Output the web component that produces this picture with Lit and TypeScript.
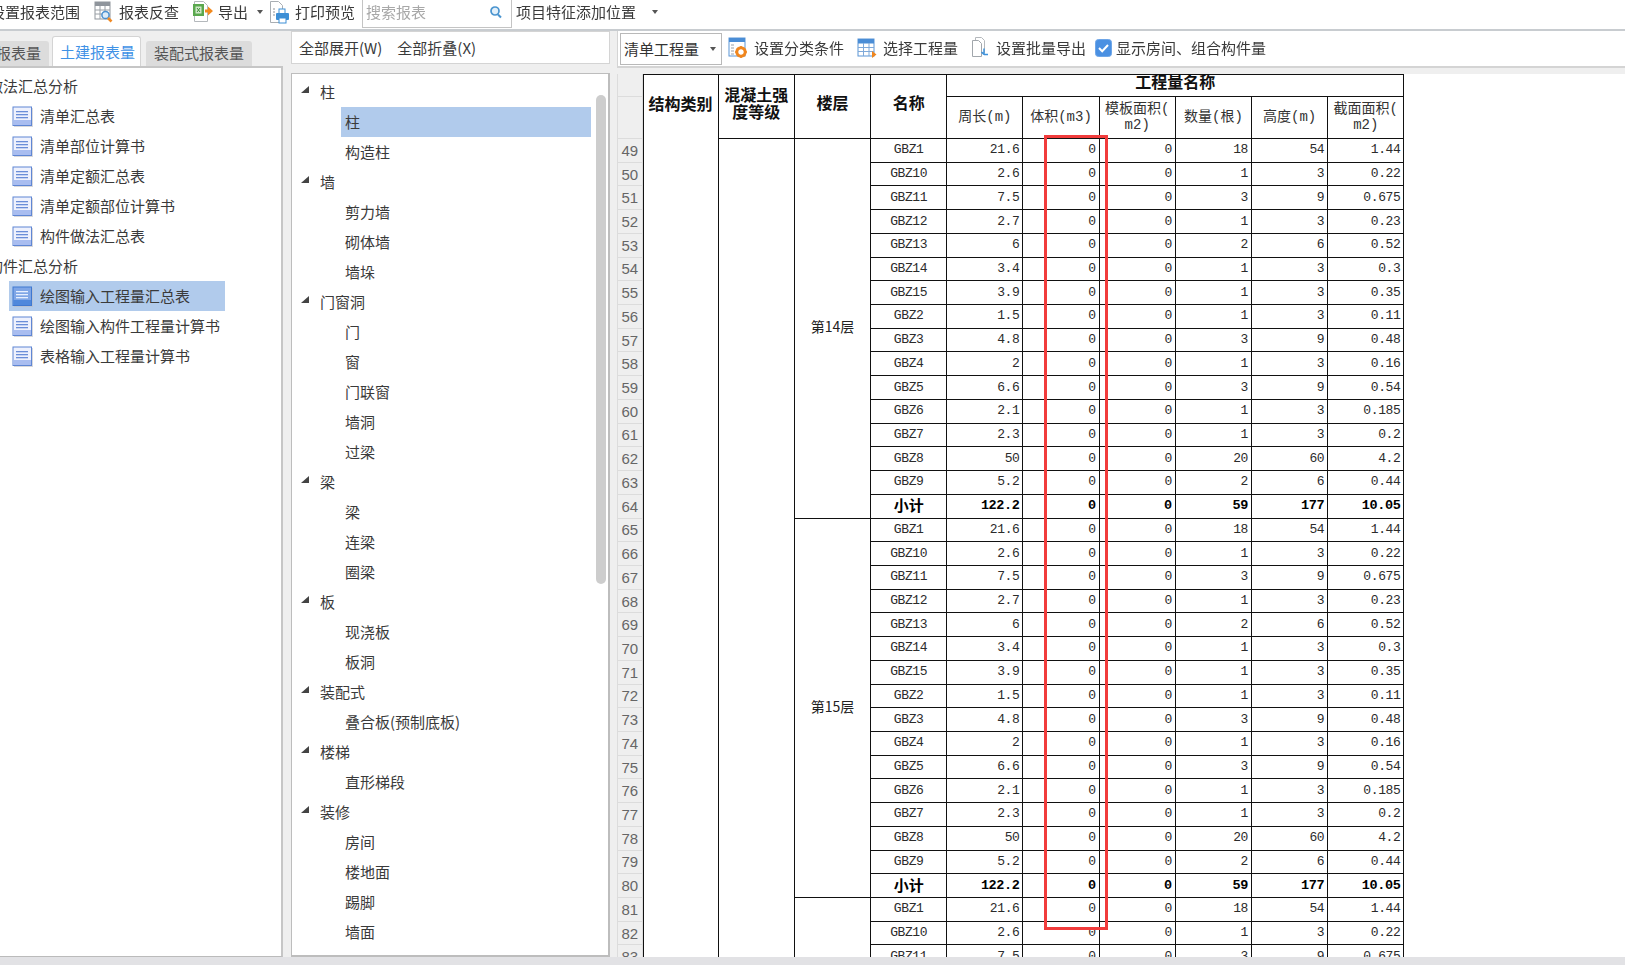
import { LitElement, html, css, svg } from "lit";
import { customElement } from "lit/decorators.js";

const base: (string | number)[][] = [
  ["GBZ1", "21.6", 0, 0, 18, 54, "1.44"],
  ["GBZ10", "2.6", 0, 0, 1, 3, "0.22"],
  ["GBZ11", "7.5", 0, 0, 3, 9, "0.675"],
  ["GBZ12", "2.7", 0, 0, 1, 3, "0.23"],
  ["GBZ13", "6", 0, 0, 2, 6, "0.52"],
  ["GBZ14", "3.4", 0, 0, 1, 3, "0.3"],
  ["GBZ15", "3.9", 0, 0, 1, 3, "0.35"],
  ["GBZ2", "1.5", 0, 0, 1, 3, "0.11"],
  ["GBZ3", "4.8", 0, 0, 3, 9, "0.48"],
  ["GBZ4", "2", 0, 0, 1, 3, "0.16"],
  ["GBZ5", "6.6", 0, 0, 3, 9, "0.54"],
  ["GBZ6", "2.1", 0, 0, 1, 3, "0.185"],
  ["GBZ7", "2.3", 0, 0, 1, 3, "0.2"],
  ["GBZ8", "50", 0, 0, 20, 60, "4.2"],
  ["GBZ9", "5.2", 0, 0, 2, 6, "0.44"],
  ["小计", "122.2", 0, 0, 59, 177, "10.05"],
];
const rows = [...base, ...base, ...base.slice(0, 3)];

const tree: [string, boolean, boolean?][] = [
  ["柱", true], ["柱", false, true], ["构造柱", false],
  ["墙", true], ["剪力墙", false], ["砌体墙", false], ["墙垛", false],
  ["门窗洞", true], ["门", false], ["窗", false], ["门联窗", false], ["墙洞", false], ["过梁", false],
  ["梁", true], ["梁", false], ["连梁", false], ["圈梁", false],
  ["板", true], ["现浇板", false], ["板洞", false],
  ["装配式", true], ["叠合板(预制底板)", false],
  ["楼梯", true], ["直形梯段", false],
  ["装修", true], ["房间", false], ["楼地面", false], ["踢脚", false], ["墙面", false], ["天棚", false],
];

const docIcon = (sel = false) => html`<svg class="doc" width="21" height="21" viewBox="0 0 21 21">
  <rect x="2" y="2" width="19" height="19" fill="#b9b9c0" opacity=".55"/>
  <rect x="1" y="1" width="18.5" height="18.5" fill="${sel ? "#7fa6e6" : "#eef1fd"}" stroke="${sel ? "#3f78d0" : "#5f86d4"}"/>
  <rect x="1.5" y="14" width="17.5" height="5" fill="${sel ? "#4f88dc" : "#a9bdf0"}"/>
  ${[5, 8, 11].map((y) => svg`<rect x="4" y="${y}" width="12" height="1.3" fill="${sel ? "#e8f0ff" : "#6b8ed8"}"/>`)}
</svg>`;

const reportIcon = html`<svg width="20" height="24" viewBox="0 0 20 24">
  <rect x="1" y="2" width="15" height="17" fill="#fff" stroke="#8f959c"/>
  <rect x="1" y="2" width="15" height="4" fill="#8f959c"/>
  <path d="M1 10h15M1 14h8M6 6v13M11 6v5" stroke="#9aa0a6" fill="none"/>
  <circle cx="11.5" cy="15" r="3.6" fill="#dcecf9" stroke="#4a90d0" stroke-width="1.5"/>
  <path d="M14 18l3.5 3.5" stroke="#f08a24" stroke-width="2.6"/>
</svg>`;
const exportIcon = html`<svg width="20" height="24" viewBox="0 0 20 24">
  <path d="M1.5 1.5h9l4 4v16h-13z" fill="#fff" stroke="#b4b8bc"/>
  <rect x="0" y="4" width="11" height="12" fill="#5aa84e"/>
  <rect x="2.5" y="6.5" width="6" height="7" fill="#cfe8c9"/>
  <path d="M4 8l3 4M7 8l-3 4" stroke="#3f8c35"/>
  <path d="M12 9.500h3v-3l5 4.500-5 4.500v-3h-3z" fill="#f28a1e"/>
</svg>`;
const printIcon = html`<svg width="21" height="25" viewBox="0 0 21 25">
  <path d="M1.500 1.500h8l4 4v17h-12z" fill="#fff" stroke="#a9aeb3"/>
  <path d="M4 9h2M4 12h2M4 15h2" stroke="#8d9298"/>
  <rect x="10" y="9" width="6" height="5" fill="#fff" stroke="#3d8fd6"/>
  <rect x="7" y="13" width="13" height="7" rx="1" fill="#3d8fd6"/>
  <rect x="10" y="18" width="7" height="5" fill="#fff" stroke="#3d8fd6"/>
</svg>`;
const searchIcon = html`<svg width="13" height="14" viewBox="0 0 13 14">
  <circle cx="6" cy="6" r="4" fill="#e3f0fa" stroke="#4a94cf" stroke-width="1.700"/>
  <path d="M9 9.500l3 3" stroke="#4a94cf" stroke-width="2"/>
</svg>`;
const gearIcon = html`<svg width="20" height="24" viewBox="0 0 20 24">
  <rect x="1" y="2" width="16" height="18" fill="#fff" stroke="#5b95d6"/>
  <rect x="1" y="2" width="16" height="4" fill="#4a8dd6"/>
  <path d="M3 9h3M3 12h3M3 15h3M3 18h3" stroke="#9aa0a6"/>
  <circle cx="13" cy="16" r="4.200" fill="#fff" stroke="#f0861e" stroke-width="3"/>
  <path d="M13 10v2.500M13 19.500v2.500M7 16h2.500M16.500 16h2.500M9 12l2 2M15 18l2 2M17 12l-2 2M11 18l-2 2" stroke="#f0861e" stroke-width="1.600"/>
</svg>`;
const gridIcon = html`<svg width="20" height="24" viewBox="0 0 20 24">
  <rect x="1" y="3" width="16" height="17" fill="#fff" stroke="#5b95d6"/>
  <rect x="1" y="3" width="16" height="4.500" fill="#4a8dd6"/>
  <path d="M1 11.500h16M1 15.500h16M6.500 7v13M12 7v13" stroke="#7fa9d9"/>
  <path d="M15 15l4.500 3.500-4.500 3.500z" fill="#f0861e"/>
</svg>`;
const batchIcon = html`<svg width="20" height="24" viewBox="0 0 20 24">
  <path d="M5.500 1.500h6l3 3v12h-9z" fill="#fff" stroke="#b4b8bc"/>
  <path d="M2.500 4.500h6l3 3v13h-9z" fill="#fff" stroke="#a2a7ac"/>
  <path d="M14 12.500v6M14 18.500h4" stroke="#3f92db" stroke-width="1.500" fill="none"/>
  <path d="M11.500 16l2.500 2.500" stroke="#3f92db" stroke-width="1.500" fill="none"/>
</svg>`;
const checkIcon = html`<svg width="17" height="18" viewBox="0 0 17 18">
  <rect x="0.500" y="0.500" width="16" height="17" rx="3" fill="#4a90e2" stroke="#6ea6e8"/>
  <path d="M4 9l3.200 3.200L13 6" stroke="#fff" stroke-width="2" fill="none"/>
</svg>`;
const caret = html`<i class="caret"></i>`;
const tri = html`<svg class="tri" width="8" height="8" viewBox="0 0 8 8"><path d="M8 0v7H0z" fill="#444"/></svg>`;

@customElement("app-root")
export class AppRoot extends LitElement {
  static styles = css`
    :host {
      display: block;
      width: 1625px;
      height: 965px;
      overflow: hidden;
      background: #efefef;
      font: 15px/20px "Noto Sans CJK SC", sans-serif;
      color: #3a3a3a;
    }
    .page { display: flex; flex-direction: column; height: 965px; filter: blur(0.35px); }
    .top {
      display: flex; align-items: center; height: 24px; padding-bottom: 5px; background: #fff;
      border-bottom: 2px solid #c8ccd0; flex: none; white-space: nowrap;
    }
    .top .first { margin-left: -10px; }
    .tool { display: flex; align-items: center; gap: 5px; }
    .t1 { margin-left: 14px; }
    .t2 { margin-left: 14px; }
    .t3 { margin-left: 6px; }
    .caret { width: 0; height: 0; border: 3px solid transparent; border-top: 4px solid #555; border-bottom: 0; }
    .t2 .caret { margin-left: 4px; }
    .search {
      margin-left: 7px; width: 150px; height: 28px; box-sizing: border-box; background: #fff;
      border: 1px solid #c4c4c4; border-top: 0; display: flex; align-items: center;
      justify-content: space-between; padding: 0 9px 4px 3px; color: #a8a8a8; align-self: flex-start;
    }
    .feature { margin-left: 4px; display: flex; align-items: center; gap: 16px; }
    .body { flex: 1; display: flex; min-height: 0; }
    .left { width: 283px; flex: none; display: flex; flex-direction: column; }
    .tabs { display: flex; align-items: flex-end; height: 35px; flex: none; overflow: hidden; }
    .tab {
      height: 25px; background: #dcdcdc; padding: 0 8px; line-height: 24px; color: #555;
      border-radius: 3px 3px 0 0; white-space: nowrap; flex: none;
    }
    .tab.clip { margin-left: -42px; }
    .tab.on {
      height: 30px; line-height: 29px; background: #fff; color: #3f92e6; margin: 0 5px 0 3px;
      padding: 0 7px; border: 1px solid #d4d4d4; border-bottom: 0; box-sizing: border-box; width: 89px;
    }
    .lp {
      flex: 1; background: #fff; border-top: 2px solid #c6c6c6; border-right: 2px solid #c6c6c6;
      border-bottom: 1px solid #bbb; padding-top: 3px; overflow: hidden; min-height: 0;
    }
    .sec { height: 30px; line-height: 29px; margin-left: -12px; white-space: nowrap; }
    .it { height: 30px; display: flex; align-items: center; margin-left: 9px; width: 216px; white-space: nowrap; }
    .it .doc { margin: 0 7px 0 3px; flex: none; }
    .it.on { background: #b1cbec; }
    .mid { width: 319px; margin-left: 8px; flex: none; display: flex; flex-direction: column; }
    .mt {
      height: 33px; flex: none; box-sizing: border-box; background: #fff; border: 1px solid #d4d4d4;
      display: flex; align-items: center; padding-left: 7px; gap: 15px; white-space: nowrap;
    }
    .tp {
      flex: 1; margin-top: 9px; background: #fff; border: 1px solid #bdbdbd; border-width: 1px 2px 2px 1px;
      padding-top: 2.500px; overflow: hidden; position: relative; min-height: 0;
    }
    .tr { height: 30px; display: flex; align-items: center; white-space: nowrap; }
    .tr.g .tri { margin: 0 11px 3px 9px; }
    .tr.c { margin-left: 49px; width: 250px; padding-left: 4px; box-sizing: border-box; }
    .tr.on { background: #b1cbec; }
    .thumb { position: absolute; left: 304px; top: 21px; width: 10px; height: 489px; border-radius: 5px; background: #cdcdcd; }
    .right { flex: 1; margin-left: 7px; display: flex; flex-direction: column; min-width: 0; position: relative; }
    .rt {
      height: 37px; flex: none; box-sizing: border-box; background: #fff; border-left: 1px solid #d4d4d4;
      border-bottom: 2px solid #d4d4d4; display: flex; align-items: center; white-space: nowrap; padding-left: 2px;
    }
    .rt .tool { margin-top: -2px; }
    .sel {
      width: 102px; height: 32px; box-sizing: border-box; border: 1px solid #b9b9b9; display: flex;
      align-items: center; justify-content: space-between; padding: 0 5px 0 3px; color: #333; flex: none;
    }
    .r1 { margin-left: 6px; gap: 6px; }
    .r2 { margin-left: 13px; gap: 6px; }
    .r3 { margin-left: 12px; gap: 6px; }
    .r4 { margin-left: 9px; gap: 4px; }
    .sheetwrap { flex: 1; margin-top: 6px; background: #fff; overflow: hidden; position: relative; min-height: 0; }
    .sheet {
      display: grid; grid-template-columns: 25.500px repeat(10, 76.200px);
      grid-template-rows: 23px 42px repeat(35, 23.730px); width: max-content; color: #222;
    }
    .cell {
      box-sizing: border-box; border-right: 1px solid #111; border-bottom: 1px solid #111;
      display: flex; align-items: center; justify-content: center; overflow: hidden; min-width: 0;
    }
    .rh {
      background: #efefef; border: 0; border-right: 1px solid #dcdcdc; border-bottom: 1px solid #dcdcdc;
      font: 15px/20px "Liberation Sans", sans-serif; color: #666; border-left: 1px solid #dcdcdc;
      padding-top: 1px;
    }
    .hd {
      font-size: 16px; font-weight: 700; text-align: center; line-height: 17px; padding: 0 0 8px;
      border-top: 1px solid #111; color: #111;
    }
    .hd.nb { border-bottom: 0; }
    .hd.first { border-left: 1px solid #111; }
    .blank.first { border-left: 1px solid #111; }
    .sub {
      font: 14px/16px "Liberation Mono", "Noto Sans CJK SC", monospace; text-align: center; color: #333;
      padding: 0 1px 1px;
    }
    .fl { font-size: 14px; color: #222; padding-bottom: 4px; }
    .num, .nm {
      font: 13px/16px "Liberation Mono", "Noto Sans CJK SC", monospace; letter-spacing: -0.4px; color: #2b2b2b;
    }
    .num { justify-content: flex-end; padding-right: 3px; }
    .tot { font-weight: 700; font-size: 13.500px; color: #000; }
    .nm.tot { font: 700 15px/16px "Noto Sans CJK SC", sans-serif; letter-spacing: 0; padding-bottom: 2px; }
    .redbox {
      position: absolute; left: 427px; top: 61px; width: 64px; height: 795px; box-sizing: border-box;
      border: 3px solid #f13c3c; pointer-events: none;
    }
    .foot { height: 8px; flex: none; background: #e2e2e5; }
  `;

  private cell(cls: string, col: string | number, row: string | number, content: unknown) {
    return html`<div class="cell ${cls}" style="grid-column:${col};grid-row:${row}">${content}</div>`;
  }

  private sheet() {
    const heads = [
      ["结构类别", 2], ["混凝土强度等级", 3], ["楼层", 4], ["名称", 5],
    ] as [string, number][];
    const subs: unknown[] = [
      "周长(m)", "体积(m3)", html`模板面积(<br />m2)`, "数量(根)", "高度(m)", html`截面面积(<br />m2)`,
    ];
    const lastRow = 3 + rows.length;
    return html`<div class="sheet">
      ${this.cell("rh", 1, 1, "")}
      ${this.cell("rh", 1, 2, "")}
      ${heads.map(([t, c]) => this.cell(`hd ${c === 2 ? "first nb" : ""}`, c, "1 / span 2", t))}
      ${this.cell("hd", "6 / span 6", 1, "工程量名称")}
      ${subs.map((s, i) => this.cell("sub", 6 + i, 2, s))}
      ${this.cell("blank first", 2, `3 / ${lastRow}`, "")}
      ${this.cell("blank", 3, `3 / ${lastRow}`, "")}
      ${this.cell("fl", 4, "3 / span 16", "第14层")}
      ${this.cell("fl", 4, "19 / span 16", "第15层")}
      ${this.cell("blank", 4, `35 / ${lastRow}`, "")}
      ${rows.map((r, i) => {
        const rn = 3 + i;
        const tot = r[0] === "小计" ? "tot" : "";
        return html`
          ${this.cell("rh", 1, rn, 49 + i)}
          ${this.cell(`nm ${tot}`, 5, rn, r[0])}
          ${r.slice(1).map((v, j) => this.cell(`num ${tot}`, 6 + j, rn, v))}
        `;
      })}
    </div>`;
  }

  render() {
    return html`<div class="page">
      <div class="top">
        <span class="first">设置报表范围</span>
        <div class="tool t1">${reportIcon}<span>报表反查</span></div>
        <div class="tool t2">${exportIcon}<span>导出</span>${caret}</div>
        <div class="tool t3">${printIcon}<span>打印预览</span></div>
        <div class="search"><span>搜索报表</span>${searchIcon}</div>
        <div class="feature"><span>项目特征添加位置</span>${caret}</div>
      </div>
      <div class="body">
        <div class="left">
          <div class="tabs">
            <div class="tab clip">钢筋报表量</div>
            <div class="tab on">土建报表量</div>
            <div class="tab">装配式报表量</div>
          </div>
          <div class="lp">
            <div class="sec">做法汇总分析</div>
            ${["清单汇总表", "清单部位计算书", "清单定额汇总表", "清单定额部位计算书", "构件做法汇总表"].map(
              (t) => html`<div class="it">${docIcon()}<span>${t}</span></div>`
            )}
            <div class="sec">构件汇总分析</div>
            <div class="it on">${docIcon(true)}<span>绘图输入工程量汇总表</span></div>
            ${["绘图输入构件工程量计算书", "表格输入工程量计算书"].map(
              (t) => html`<div class="it">${docIcon()}<span>${t}</span></div>`
            )}
          </div>
        </div>
        <div class="mid">
          <div class="mt"><span>全部展开(W)</span><span>全部折叠(X)</span></div>
          <div class="tp">
            ${tree.map(([t, g, on]) =>
              g
                ? html`<div class="tr g">${tri}<span>${t}</span></div>`
                : html`<div class="tr c ${on ? "on" : ""}"><span>${t}</span></div>`
            )}
            <div class="thumb"></div>
          </div>
        </div>
        <div class="right">
          <div class="rt">
            <div class="sel"><span>清单工程量</span>${caret}</div>
            <div class="tool r1">${gearIcon}<span>设置分类条件</span></div>
            <div class="tool r2">${gridIcon}<span>选择工程量</span></div>
            <div class="tool r3">${batchIcon}<span>设置批量导出</span></div>
            <div class="tool r4">${checkIcon}<span>显示房间、组合构件量</span></div>
          </div>
          <div class="sheetwrap">
            ${this.sheet()}
            <div class="redbox"></div>
          </div>
        </div>
      </div>
      <div class="foot"></div>
    </div>`;
  }
}
